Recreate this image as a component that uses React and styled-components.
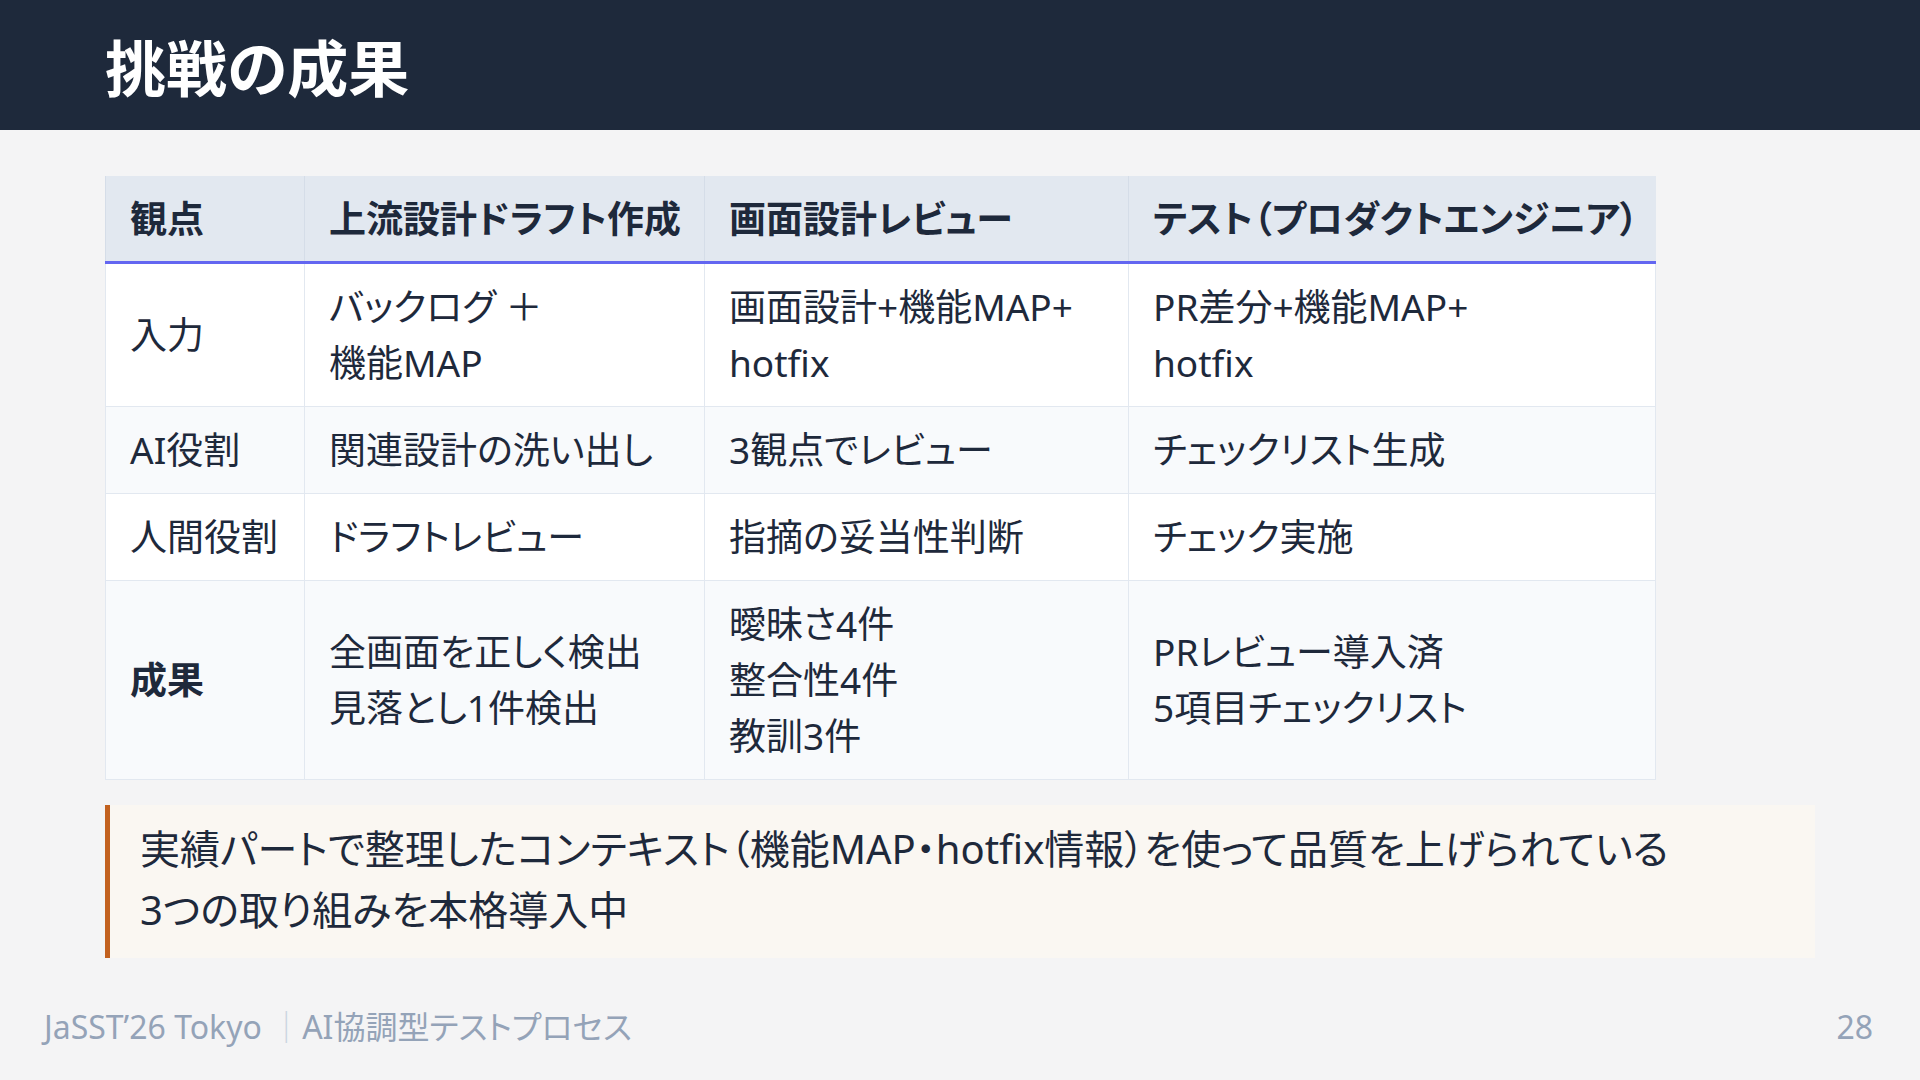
import React from "react";
import styled, { createGlobalStyle } from "styled-components";

const GlobalStyle = createGlobalStyle`
  html, body {
    margin: 0;
    padding: 0;
  }
  body {
    font-family: "Noto Sans", "Noto Sans CJK JP", sans-serif;
    font-feature-settings: "palt";
    background: #f4f4f5;
    color: #1e293b;
  }
`;

const columns = [199, 400, 424, 527];

const headers = ["観点", "上流設計ドラフト作成", "画面設計レビュー", "テスト（プロダクトエンジニア）"];

const rows = [
  { label: "入力", cells: [["バックログ ＋", "機能MAP"], ["画面設計+機能MAP+", "hotfix"], ["PR差分+機能MAP+", "hotfix"]] },
  { label: "AI役割", cells: [["関連設計の洗い出し"], ["3観点でレビュー"], ["チェックリスト生成"]] },
  { label: "人間役割", cells: [["ドラフトレビュー"], ["指摘の妥当性判断"], ["チェック実施"]] },
  {
    label: "成果",
    strong: true,
    cells: [["全画面を正しく検出", "見落とし1件検出"], ["曖昧さ4件", "整合性4件", "教訓3件"], ["PRレビュー導入済", "5項目チェックリスト"]],
  },
];

const App = () => {
  return (
    <>
      <GlobalStyle />
      <Slide>
        <TitleBar>
          <Title>挑戦の成果</Title>
        </TitleBar>
        <Main>
          <Table>
            <colgroup>
              {columns.map((w, i) => (
                <col key={i} style={{ width: w }} />
              ))}
            </colgroup>
            <thead>
              <tr>
                {headers.map((h) => (
                  <Th key={h}>{h}</Th>
                ))}
              </tr>
            </thead>
            <tbody>
              {rows.map((row, i) => (
                <Row key={row.label} $alt={i % 2 === 1}>
                  <Td $strong={row.strong}>{row.label}</Td>
                  {row.cells.map((lines, j) => (
                    <Td key={j}>
                      {lines.map((l, k) => (
                        <Line key={k}>{l}</Line>
                      ))}
                    </Td>
                  ))}
                </Row>
              ))}
            </tbody>
          </Table>
          <Callout>
            <Line>実績パートで整理したコンテキスト（機能MAP・hotfix情報）を使って品質を上げられている</Line>
            <Line>3つの取り組みを本格導入中</Line>
          </Callout>
        </Main>
        <Footer>
          <span>
            JaSST’26 Tokyo <Sep>｜</Sep>AI協調型テストプロセス
          </span>
          <span>28</span>
        </Footer>
      </Slide>
    </>
  );
};

const Slide = styled.div`
  width: 1920px;
  height: 1080px;
  display: flex;
  flex-direction: column;
  overflow: hidden;
`;

const TitleBar = styled.header`
  height: 130px;
  background: #1e293b;
  display: flex;
  align-items: center;
  padding: 0 105px;
  box-sizing: border-box;
`;

const Title = styled.h1`
  margin: 0;
  color: #ffffff;
  font-size: 61px;
  font-weight: 700;
`;

const Main = styled.main`
  padding: 46px 105px 0;
  display: flex;
  flex-direction: column;
  gap: 25px;
`;

const Table = styled.table`
  width: 1550px;
  table-layout: fixed;
  border-collapse: collapse;
  font-size: 37px;
  line-height: 56px;
  border: 1px solid #e2e8f0;
`;

const Th = styled.th`
  background: #e2e8f0;
  text-align: left;
  font-weight: 700;
  padding: 14px 24px;
  border-left: 1px solid #d5dde8;
  border-bottom: 3px solid #6366f1;
  white-space: nowrap;
`;

const Row = styled.tr`
  background: ${(p) => (p.$alt ? "#f8fafc" : "#ffffff")};
`;

const Td = styled.td`
  padding: 15px 24px;
  vertical-align: middle;
  font-weight: ${(p) => (p.$strong ? 700 : 400)};
  border: 1px solid #e2e8f0;
  white-space: nowrap;
`;

const Line = styled.div``;

const Callout = styled.div`
  width: 1710px;
  box-sizing: border-box;
  background: #faf7f2;
  border-left: 5px solid #c2611f;
  padding: 13px 30px 18px;
  font-size: 40px;
  line-height: 61px;
  color: #1e293b;
  white-space: nowrap;
`;

const Footer = styled.footer`
  margin-top: auto;
  display: flex;
  justify-content: space-between;
  align-items: center;
  padding: 0 47px 32px 44px;
  font-size: 32px;
  line-height: 42px;
  color: #94a3b8;
`;

const Sep = styled.span`
  color: #cbd5e1;
`;

export default App;
